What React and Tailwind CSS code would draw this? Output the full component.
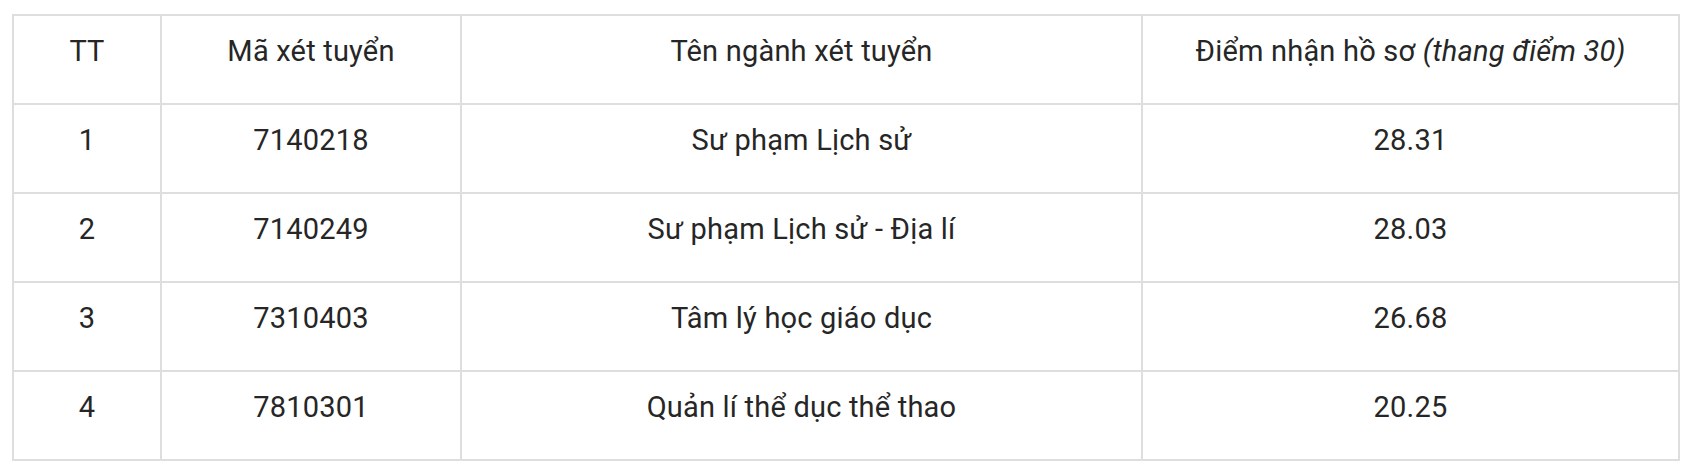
import React from 'react';

const rows = [
  { tt: '1', ma: '7140218', ten: 'Sư phạm Lịch sử', diem: '28.31' },
  { tt: '2', ma: '7140249', ten: 'Sư phạm Lịch sử - Địa lí', diem: '28.03' },
  { tt: '3', ma: '7310403', ten: 'Tâm lý học giáo dục', diem: '26.68' },
  { tt: '4', ma: '7810301', ten: 'Quản lí thể dục thể thao', diem: '20.25' },
];

const cell =
  'border-r-2 border-b-2 border-[#dedede] text-center align-top pt-[14px] pb-[31px] leading-[42px] font-normal';

const App = () => {
  return (
    <div className="w-[1690px] h-[471px] bg-white pt-[14px] pl-[12px] text-[29px] tracking-[0.2px] text-[#262626] font-['Roboto',sans-serif]">
      <table className="border-separate border-spacing-0 border-l-2 border-t-2 border-[#dedede] table-fixed w-[1668px]">
        <colgroup>
          <col className="w-[148px]" />
          <col className="w-[300px]" />
          <col className="w-[681px]" />
          <col className="w-[537px]" />
        </colgroup>
        <thead>
          <tr>
            <th className={cell}>TT</th>
            <th className={cell}>Mã xét tuyển</th>
            <th className={cell}>Tên ngành xét tuyển</th>
            <th className={cell}>
              Điểm nhận hồ sơ <em className="italic">(thang điểm 30)</em>
            </th>
          </tr>
        </thead>
        <tbody>
          {rows.map((r) => (
            <tr key={r.tt}>
              <td className={cell}>{r.tt}</td>
              <td className={cell}>{r.ma}</td>
              <td className={cell}>{r.ten}</td>
              <td className={cell}>{r.diem}</td>
            </tr>
          ))}
        </tbody>
      </table>
    </div>
  );
};

export default App;
